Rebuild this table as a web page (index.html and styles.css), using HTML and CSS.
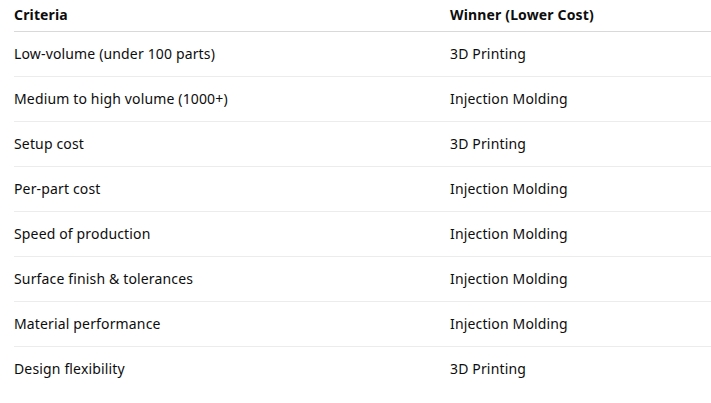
FILE: index.html
```html
<!DOCTYPE html>
<html>
<head>
<meta charset="utf-8">
<link rel="stylesheet" href="styles.css">
</head>
<body>
<table class="cmp">
  <thead>
    <tr><th class="c1">Criteria</th><th class="c2">Winner (Lower Cost)</th></tr>
  </thead>
  <tbody>
    <tr><td>Low-volume (under 100 parts)</td><td>3D Printing</td></tr>
    <tr><td>Medium to high volume (1000+)</td><td>Injection Molding</td></tr>
    <tr><td>Setup cost</td><td>3D Printing</td></tr>
    <tr><td>Per-part cost</td><td>Injection Molding</td></tr>
    <tr><td>Speed of production</td><td>Injection Molding</td></tr>
    <tr><td>Surface finish &amp; tolerances</td><td>Injection Molding</td></tr>
    <tr><td>Material performance</td><td>Injection Molding</td></tr>
    <tr><td>Design flexibility</td><td>3D Printing</td></tr>
  </tbody>
</table>
</body>
</html>
```
FILE: styles.css
```css
html, body {
  margin: 0;
  padding: 0;
  background: #ffffff;
}
body {
  font-family: "Segoe UI", "Noto Sans", "Open Sans", sans-serif;
  font-size: 14px;
  color: #0d0d0d;
  letter-spacing: 0.15px;
}
.cmp {
  margin-left: 14px;
  width: 697px;
  border-collapse: collapse;
  table-layout: fixed;
}
.cmp th {
  text-align: left;
  font-weight: 700;
  line-height: 20px;
  padding: 5px 0 6px 0;
  border-bottom: 1px solid #d9d9d9;
}
.cmp .c1 { width: 436px; }
.cmp td {
  line-height: 20px;
  padding: 12px 0;
  border-bottom: 1px solid #ececec;
}
.cmp tbody tr:last-child td {
  border-bottom: none;
}
```
